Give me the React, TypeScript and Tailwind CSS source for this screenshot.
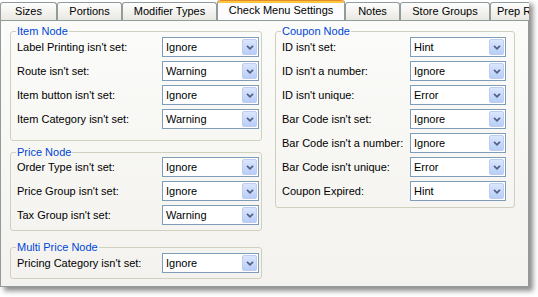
import React from 'react';

type Row = { label: string; value: string };

const tabs = [
  { label: 'Sizes', w: 'w-[57px]' },
  { label: 'Portions', w: 'w-[65px]' },
  { label: 'Modifier Types', w: 'w-[95px]' },
  { label: 'Check Menu Settings', w: 'w-[128px]', active: true },
  { label: 'Notes', w: 'w-[55px]' },
  { label: 'Store Groups', w: 'w-[90px]' },
  { label: 'Prep Recipes', w: 'w-[80px]' },
];

const itemRows: Row[] = [
  { label: "Label Printing isn't set:", value: 'Ignore' },
  { label: "Route isn't set:", value: 'Warning' },
  { label: "Item button isn't set:", value: 'Ignore' },
  { label: "Item Category isn't set:", value: 'Warning' },
];

const priceRows: Row[] = [
  { label: "Order Type isn't set:", value: 'Ignore' },
  { label: "Price Group isn't set:", value: 'Ignore' },
  { label: "Tax Group isn't set:", value: 'Warning' },
];

const multiRows: Row[] = [{ label: "Pricing Category isn't set:", value: 'Ignore' }];

const couponRows: Row[] = [
  { label: "ID isn't set:", value: 'Hint' },
  { label: "ID isn't a number:", value: 'Ignore' },
  { label: "ID isn't unique:", value: 'Error' },
  { label: "Bar Code isn't set:", value: 'Ignore' },
  { label: "Bar Code isn't a number:", value: 'Ignore' },
  { label: "Bar Code isn't unique:", value: 'Error' },
  { label: 'Coupon Expired:', value: 'Hint' },
];

// XP style combo box with the little blue drop button
const Combo: React.FC<{ value: string; w: string }> = ({ value, w }) => (
  <div className={`flex h-[20px] ${w} items-center border border-[#7f9db9] bg-white pl-[3px] pr-px`}>
    <span className="flex-1 text-[11px] leading-none text-black">{value}</span>
    <div className="flex h-[16px] w-[15px] items-center justify-center rounded-[2px] border border-[#bccdf2] bg-gradient-to-b from-[#dbe6fe] to-[#b9cdf7]">
      <svg width="8" height="5" viewBox="0 0 8 5">
        <path d="M1 0.8 L4 3.8 L7 0.8" stroke="#4d6185" strokeWidth="1.7" fill="none" />
      </svg>
    </div>
  </div>
);

const Group: React.FC<{
  title: string;
  rows: Row[];
  labelW: string;
  comboW: string;
  className?: string;
  rowsClass?: string;
}> = ({ title, rows, labelW, comboW, className = '', rowsClass = '' }) => (
  <fieldset className={`rounded-[3px] border border-[#d0d0bf] pl-[6px] ${className}`}>
    <legend className="ml-[-1px] px-px text-[11px] leading-[12px] text-[#0046d5]">{title}</legend>
    <div className={`flex flex-col gap-[4px] ${rowsClass}`}>
      {rows.map((r) => (
        <div key={r.label} className="flex items-center">
          <span className={`${labelW} text-[11px] leading-none text-black`}>{r.label}</span>
          <Combo value={r.value} w={comboW} />
        </div>
      ))}
    </div>
  </fieldset>
);

export default function App() {
  return (
    <div className="h-[297px] w-[538px] bg-white" style={{ fontFamily: '"Liberation Sans", Tahoma, Arial, sans-serif' }}>
      <div className="flex h-[287px] w-[529px] flex-col overflow-hidden shadow-[4px_4px_5px_rgba(0,0,0,0.45)]">
        {/* Tabs */}
        <div className="flex h-[20px] items-end overflow-hidden bg-white">
          {tabs.map((t) =>
            t.active ? (
              <div
                key={t.label}
                className={`relative z-10 -mb-px flex h-[21px] ${t.w} shrink-0 flex-col rounded-t-[3px] border-x border-[#919b9c] bg-[#fcfcfe]`}
              >
                <div className="h-[3px] rounded-t-[3px] border-t border-[#e68b2c] bg-[#ffc83c]" />
                <span className="mt-[1px] text-center text-[11px] leading-[12px] text-black">{t.label}</span>
              </div>
            ) : (
              <div
                key={t.label}
                className={`flex h-[18px] ${t.w} shrink-0 items-center justify-center rounded-t-[3px] border-x border-t border-[#919b9c] bg-gradient-to-b from-[#fefefe] to-[#e9e8e1] text-[11px] leading-none text-black`}
              >
                <span className="whitespace-nowrap">{t.label}</span>
              </div>
            )
          )}
        </div>

        {/* Tab page */}
        <div className="flex flex-1 gap-[13px] border border-[#919b9c] bg-gradient-to-b from-[#fbfbf9] to-[#f3f2ee] pl-[9px] pt-[4px]">
          <div className="flex w-[252px] flex-col">
            <Group title="Item Node" rows={itemRows} labelW="w-[145px]" comboW="w-[97px]" className="pb-[11px]" />
            <Group
              title="Price Node"
              rows={priceRows}
              labelW="w-[145px]"
              comboW="w-[97px]"
              className="mt-[5px] pb-[5px]"
              rowsClass="-mt-px"
            />
            <Group title="Multi Price Node" rows={multiRows} labelW="w-[145px]" comboW="w-[97px]" className="mt-[10px] pb-[5px]" />
          </div>
          <div className="flex w-[240px] flex-col">
            <Group title="Coupon Node" rows={couponRows} labelW="w-[128px]" comboW="w-[96px]" className="pb-[6px]" />
          </div>
        </div>
      </div>
    </div>
  );
}
